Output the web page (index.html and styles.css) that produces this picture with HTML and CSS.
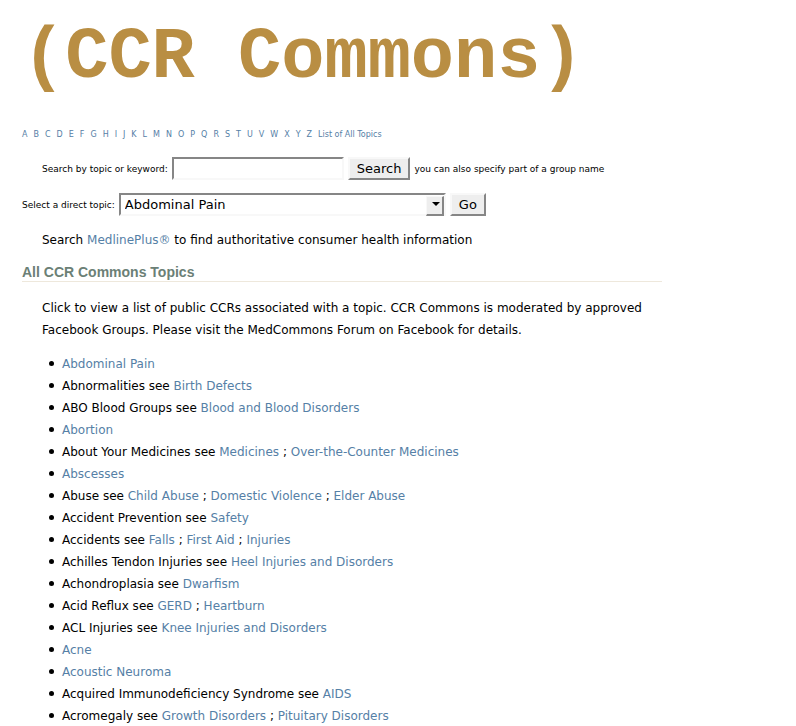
FILE: index.html
```html
<!DOCTYPE html>
<html lang="en">
<head>
<meta charset="utf-8">
<title>CCR Commons</title>
<link rel="stylesheet" href="styles.css">
</head>
<body>
<header>
<h1 class="logo">(CCR Commons)</h1>
<nav class="letters">
<a href="#a">A</a><a href="#b">B</a><a href="#c">C</a><a href="#d">D</a><a href="#e">E</a><a href="#f">F</a><a href="#g">G</a><a href="#h">H</a><a href="#i">I</a><a href="#j">J</a><a href="#k">K</a><a href="#l">L</a><a href="#m">M</a><a href="#n">N</a><a href="#o">O</a><a href="#p">P</a><a href="#q">Q</a><a href="#r">R</a><a href="#s">S</a><a href="#t">T</a><a href="#u">U</a><a href="#v">V</a><a href="#w">W</a><a href="#x">X</a><a href="#y">Y</a><a href="#z">Z</a><a class="all" href="#all">List of All Topics</a>
</nav>
</header>
<main>
<form class="row search">
<label for="keyword">Search by topic or keyword:</label>
<input class="field" id="keyword" type="text">
<button type="button">Search</button>
<span>you can also specify part of a group name</span>
</form>
<form class="row direct">
<label for="topic">Select a direct topic:</label>
<span class="picker"><select id="topic"><option>Abdominal Pain</option><option>Abortion</option><option>Abscesses</option><option>Acne</option><option>Acoustic Neuroma</option></select></span>
<button type="button">Go</button>
</form>
<p class="medline">Search <a href="#medline">MedlinePlus®</a> to find authoritative consumer health information</p>
<h2>All CCR Commons Topics</h2>
<p class="intro">Click to view a list of public CCRs associated with a topic. CCR Commons is moderated by approved Facebook Groups. Please visit the MedCommons Forum on Facebook for details.</p>
<ul class="topics">
<li><a href="#t">Abdominal Pain</a></li>
<li>Abnormalities see <a href="#t">Birth Defects</a></li>
<li>ABO Blood Groups see <a href="#t">Blood and Blood Disorders</a></li>
<li><a href="#t">Abortion</a></li>
<li>About Your Medicines see <a href="#t">Medicines</a> ; <a href="#t">Over-the-Counter Medicines</a></li>
<li><a href="#t">Abscesses</a></li>
<li>Abuse see <a href="#t">Child Abuse</a> ; <a href="#t">Domestic Violence</a> ; <a href="#t">Elder Abuse</a></li>
<li>Accident Prevention see <a href="#t">Safety</a></li>
<li>Accidents see <a href="#t">Falls</a> ; <a href="#t">First Aid</a> ; <a href="#t">Injuries</a></li>
<li>Achilles Tendon Injuries see <a href="#t">Heel Injuries and Disorders</a></li>
<li>Achondroplasia see <a href="#t">Dwarfism</a></li>
<li>Acid Reflux see <a href="#t">GERD</a> ; <a href="#t">Heartburn</a></li>
<li>ACL Injuries see <a href="#t">Knee Injuries and Disorders</a></li>
<li><a href="#t">Acne</a></li>
<li><a href="#t">Acoustic Neuroma</a></li>
<li>Acquired Immunodeficiency Syndrome see <a href="#t">AIDS</a></li>
<li>Acromegaly see <a href="#t">Growth Disorders</a> ; <a href="#t">Pituitary Disorders</a></li>
</ul>
</main>
</body>
</html>
```
FILE: styles.css
```css
* {
  box-sizing: border-box;
}

body {
  margin: 0;
  padding: 16px 22px 0;
  background: #fff;
  color: #000;
  font: 12px/22px Verdana, "DejaVu Sans", sans-serif;
}

header,
main {
  max-width: 640px;
}

a {
  color: #5580a6;
  text-decoration: none;
}

.logo {
  margin: 0;
  color: #b98e43;
  font: bold 72px/84px "Courier New", "Liberation Mono", monospace;
  white-space: nowrap;
}

.letters {
  display: flex;
  gap: 6px;
  margin-top: 29px;
  font-size: 8px;
  line-height: 12px;
}

.row {
  display: flex;
  align-items: center;
  gap: 4px;
  font-size: 9px;
  white-space: nowrap;
}

.search {
  margin: 16px 0 0 20px;
}

.direct {
  margin-top: 13px;
}

.field,
select,
button {
  height: 23px;
  border: 2px solid;
  border-radius: 0;
  color: #000;
  font: 13px/17px "Lucida Grande", "DejaVu Sans", sans-serif;
}

.field,
select {
  border-color: #868686 #f8f8f8 #f8f8f8 #868686;
  background: #fff;
}

.field {
  width: 172px;
  padding: 0 4px;
}

.picker {
  display: flex;
  position: relative;
  width: 327px;
}

select {
  width: 100%;
  padding: 0 4px;
  appearance: none;
}

.picker::before {
  content: "";
  position: absolute;
  top: 3px;
  right: 2px;
  width: 15px;
  height: 17px;
  border: 1px solid;
  border-width: 1px 2px 2px 1px;
  border-color: #f8f8f8 #868686 #868686 #f8f8f8;
  background: #eee;
  pointer-events: none;
}

.picker::after {
  content: "";
  position: absolute;
  top: 9px;
  right: 6px;
  border: 4px solid transparent;
  border-top-color: #000;
  border-bottom: 0;
  pointer-events: none;
}

button {
  padding: 0 7px;
  border-color: #f8f8f8 #868686 #868686 #f8f8f8;
  background: #eee;
}

.medline {
  margin: 13px 0 0 20px;
}

h2 {
  margin: 12px 0 0;
  border-bottom: 1px solid #eee8dc;
  color: #6b8076;
  font: bold 14px/18px Arial, "Liberation Sans", sans-serif;
}

.intro {
  margin: 15px 0 0 20px;
}

.topics {
  margin: 12px 0 0;
  padding-left: 40px;
  list-style: none;
}

.topics li {
  position: relative;
}

.topics li::before {
  content: "";
  position: absolute;
  top: 8px;
  left: -13px;
  width: 5px;
  height: 5px;
  border-radius: 50%;
  background: #000;
}
```
